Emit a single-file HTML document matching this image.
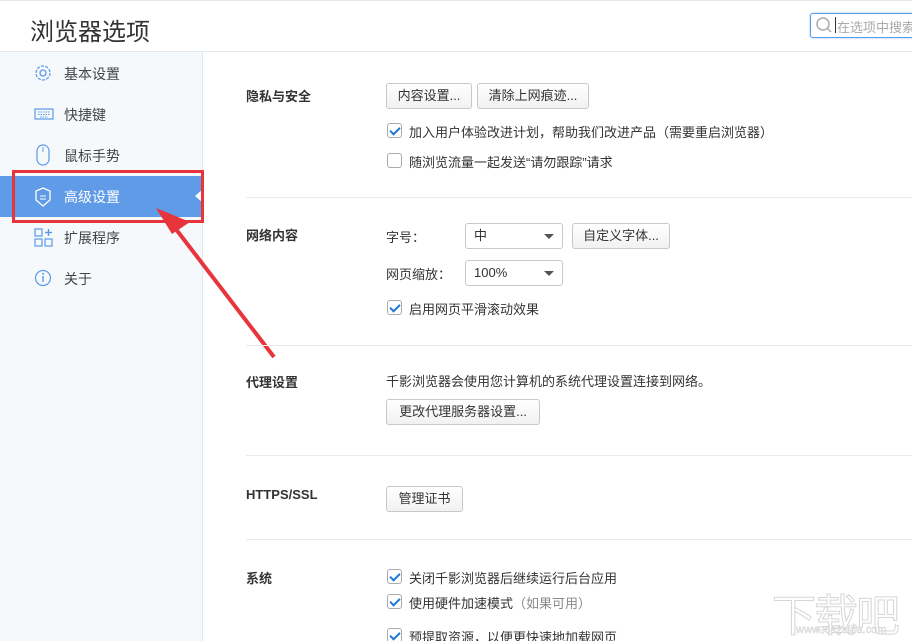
<!DOCTYPE html>
<html><head><meta charset="utf-8"><style>
*{margin:0;padding:0;box-sizing:border-box}
html,body{width:912px;height:641px;overflow:hidden}
body{background:#fff;font-family:"Liberation Sans","Noto Sans CJK SC",sans-serif;font-size:13px;color:#333;position:relative}
.a{position:absolute;white-space:nowrap}
.hdr{position:absolute;left:0;top:0;width:912px;height:52px;border-top:1px solid #e6e6e6;border-bottom:1px solid #e4e7ea;background:#fff}
.side{position:absolute;left:0;top:52px;width:203px;height:589px;background:#f6f9fc;border-right:1px solid #e3e6ea}
.item{position:absolute;left:0;width:202px;height:41px;font-size:14px;color:#444}
.item span{position:absolute;left:64px;top:11px}
.item svg{position:absolute;left:34px;top:11px}
.act{background:#5f9be6;color:#fff}
.btn{position:absolute;height:26px;border:1px solid #c8c8c8;border-radius:3px;background:linear-gradient(#fff,#f1f1f1);font-size:13px;line-height:24px;text-align:center;color:#333}
.cb{position:absolute;width:15px;height:15px;border:1px solid #aaa;border-radius:3px;background:#fff}
.cb.on::after{content:"";position:absolute;left:4px;top:1px;width:4px;height:8px;border:solid #1e78d8;border-width:0 2px 2px 0;transform:rotate(45deg)}
.hr{position:absolute;left:246px;width:666px;height:1px;background:#ebebeb}
.h{position:absolute;left:246px;font-weight:bold;font-size:13px;color:#333}
.sel{position:absolute;height:26px;border:1px solid #c8c8c8;border-radius:3px;background:#fff;padding-left:8px;line-height:24px}
.sel::after{content:"";position:absolute;right:8px;top:10px;border:5px solid transparent;border-top:5px solid #555;border-bottom:0}
</style></head><body>
<div class="hdr"></div>
<div class="a" style="left:30px;top:12px;font-size:24px;color:#333">浏览器选项</div>
<div class="a" style="left:810px;top:13px;width:110px;height:25px;border:1px solid #5a9ee8;border-radius:3px;box-shadow:0 0 2px #9cc4f0"></div>
<svg class="a" style="left:815px;top:16px" width="18" height="18"><circle cx="8" cy="8" r="6" fill="none" stroke="#aaa" stroke-width="1.5"/><path d="M12 12L16 16" stroke="#aaa" stroke-width="1.5"/></svg>
<div class="a" style="left:835px;top:17px;width:1px;height:16px;background:#333"></div>
<div class="a" style="left:837px;top:17px;font-size:13px;color:#aaa">在选项中搜索</div>
<div class="side"></div>
<div class="item" style="top:53px"><svg width="18" height="18"><circle cx="9" cy="9" r="3" fill="none" stroke="#5b9be6" stroke-width="1.3"/><circle cx="9" cy="9" r="7" fill="none" stroke="#5b9be6" stroke-width="1.3" stroke-dasharray="3 1.4"/></svg><span>基本设置</span></div>
<div class="item" style="top:94px"><svg width="20" height="18"><rect x="1" y="4" width="18" height="10" fill="none" stroke="#5b9be6" stroke-width="1.2"/><path d="M4 7h12M4 9.5h12M6 12h8" stroke="#5b9be6" stroke-dasharray="1.5 1"/></svg><span>快捷键</span></div>
<div class="item" style="top:135px"><svg width="18" height="22" style="top:9px"><rect x="3" y="1" width="12" height="20" rx="6" fill="none" stroke="#5b9be6" stroke-width="1.2"/><path d="M9 3v5" stroke="#5b9be6"/></svg><span>鼠标手势</span></div>
<div class="item act" style="top:176px"><svg width="18" height="20"><path d="M9 1L16 4V13L9 19L2 13V4Z" fill="none" stroke="#fff" stroke-width="1.3"/><path d="M6 9h6M6 12h6" stroke="#fff"/></svg><span>高级设置</span><div class="a" style="right:0;top:14px;border:6px solid transparent;border-right:7px solid #fff;border-left:0"></div></div>
<div class="item" style="top:217px"><svg width="20" height="20"><rect x="1" y="1" width="7" height="7" fill="none" stroke="#5b9be6" stroke-width="1.2"/><rect x="1" y="11" width="7" height="7" fill="none" stroke="#5b9be6" stroke-width="1.2"/><rect x="11" y="11" width="7" height="7" fill="none" stroke="#5b9be6" stroke-width="1.2"/><path d="M14.5 1v7M11 4.5h7" stroke="#5b9be6" stroke-width="1.4"/></svg><span>扩展程序</span></div>
<div class="item" style="top:258px"><svg width="18" height="18"><circle cx="9" cy="9" r="7.5" fill="none" stroke="#5b9be6" stroke-width="1.2"/><path d="M9 7v6" stroke="#5b9be6" stroke-width="1.4"/><circle cx="9" cy="4.8" r="1" fill="#5b9be6"/></svg><span>关于</span></div>
<div class="a" style="left:12px;top:170px;width:192px;height:53px;border:3px solid #e8353b"></div>
<svg class="a" style="left:150px;top:200px" width="130" height="160"><path d="M124 157L22 24" stroke="#e8353b" stroke-width="4"/><path d="M6 8L40 22L22 34Z" fill="#e8353b"/></svg>

<div class="h" style="top:86px">隐私与安全</div>
<div class="btn" style="left:386px;top:83px;width:86px">内容设置...</div>
<div class="btn" style="left:477px;top:83px;width:112px">清除上网痕迹...</div>
<div class="cb on" style="left:387px;top:123px"></div><div class="a" style="left:409px;top:122px">加入用户体验改进计划，帮助我们改进产品（需要重启浏览器）</div>
<div class="cb" style="left:387px;top:153px"></div><div class="a" style="left:409px;top:152px">随浏览流量一起发送“请勿跟踪”请求</div>
<div class="hr" style="top:197px"></div>
<div class="h" style="top:225px">网络内容</div>
<div class="a" style="left:386px;top:227px">字号：</div>
<div class="sel" style="left:465px;top:223px;width:98px">中</div>
<div class="btn" style="left:572px;top:223px;width:98px">自定义字体...</div>
<div class="a" style="left:386px;top:264px">网页缩放：</div>
<div class="sel" style="left:465px;top:260px;width:98px">100%</div>
<div class="cb on" style="left:387px;top:300px"></div><div class="a" style="left:409px;top:299px">启用网页平滑滚动效果</div>
<div class="hr" style="top:345px"></div>
<div class="h" style="top:372px">代理设置</div>
<div class="a" style="left:386px;top:371px">千影浏览器会使用您计算机的系统代理设置连接到网络。</div>
<div class="btn" style="left:386px;top:399px;width:154px">更改代理服务器设置...</div>
<div class="hr" style="top:455px"></div>
<div class="h" style="top:487px">HTTPS/SSL</div>
<div class="btn" style="left:386px;top:486px;width:77px">管理证书</div>
<div class="hr" style="top:539px"></div>
<div class="h" style="top:568px">系统</div>
<div class="cb on" style="left:387px;top:569px"></div><div class="a" style="left:409px;top:568px">关闭千影浏览器后继续运行后台应用</div>
<div class="cb on" style="left:387px;top:594px"></div><div class="a" style="left:409px;top:593px">使用硬件加速模式<span style="color:#888">（如果可用）</span></div>
<div class="cb on" style="left:387px;top:628px"></div><div class="a" style="left:409px;top:627px">预提取资源，以便更快速地加载网页</div>
<div class="a" style="left:772px;top:580px;font-size:44px;color:#fff;-webkit-text-stroke:1px #d6d6d6;letter-spacing:-2px">下载吧</div>
<div class="a" style="left:796px;top:624px;font-size:11px;color:#fff;-webkit-text-stroke:0.4px #c8c8c8">www.xiazaiba.com</div>
</body></html>
